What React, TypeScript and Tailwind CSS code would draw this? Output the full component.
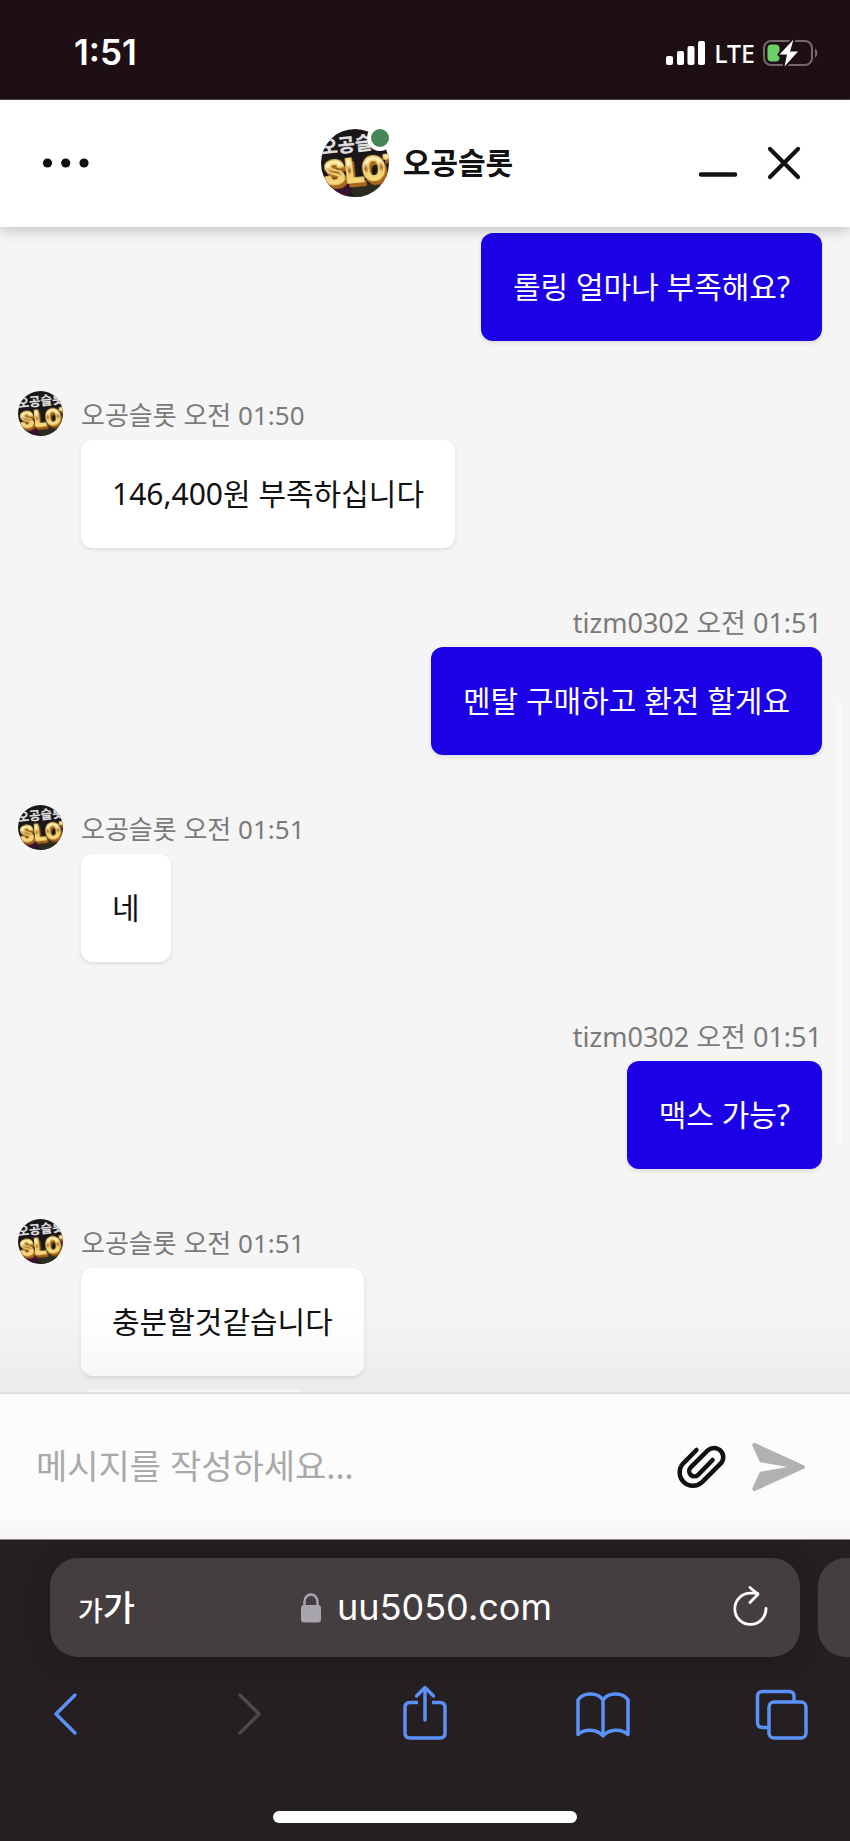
import type { ReactNode } from 'react';

interface Message {
  id: number;
  mine: boolean;
  time?: string;
  text: string;
}

const AGENT_NAME = '오공슬롯';
const USER_NAME = 'tizm0302';

const messages: Message[] = [
  { id: 1, mine: true, text: '롤링 얼마나 부족해요?' },
  { id: 2, mine: false, time: '오전 01:50', text: '146,400원 부족하십니다' },
  { id: 3, mine: true, time: '오전 01:51', text: '멘탈 구매하고 환전 할게요' },
  { id: 4, mine: false, time: '오전 01:51', text: '네' },
  { id: 5, mine: true, time: '오전 01:51', text: '맥스 가능?' },
  { id: 6, mine: false, time: '오전 01:51', text: '충분할것같습니다' },
];

function Avatar({ className }: { className: string }) {
  return (
    <svg viewBox="0 0 68 68" className={className} aria-hidden="true">
      <defs>
        <clipPath id="avatar-clip">
          <circle cx="34" cy="34" r="34" />
        </clipPath>
        <linearGradient id="avatar-gold" x1="0" y1="0" x2="0" y2="1">
          <stop offset="0" stopColor="#ffe98f" />
          <stop offset="0.35" stopColor="#fff8d4" />
          <stop offset="0.5" stopColor="#9a5a18" />
          <stop offset="0.6" stopColor="#f3cc68" />
          <stop offset="1" stopColor="#fff0b0" />
        </linearGradient>
      </defs>
      <g clipPath="url(#avatar-clip)">
        <rect width="68" height="68" fill="#1b1719" />
        <ellipse cx="14" cy="60" rx="16" ry="10" fill="#3a1030" />
        <ellipse cx="48" cy="62" rx="18" ry="7" fill="#2c2b20" />
        <g transform="rotate(-6 34 34)">
          <text x="1" y="22" fontSize="19" fontWeight="900" fill="#dcdcde" fontFamily="'Noto Sans CJK KR', sans-serif">
            오공슬롯
          </text>
          <text
            x="2"
            y="53"
            fontSize="34"
            fontWeight="700"
            fontFamily="Roboto, sans-serif"
            fill="url(#avatar-gold)"
            stroke="#f5d478"
            strokeWidth="2"
            strokeLinejoin="round"
            className="drop-shadow-[2px_4px_0_#a8681a]"
          >
            SLOT
          </text>
        </g>
      </g>
    </svg>
  );
}

function StatusBar() {
  return (
    <div className="flex shrink-0 items-center justify-between border-b border-[#54474c] bg-[#1e0f15] pt-[33px] pr-[30px] pb-[27px] pl-[74px] text-white">
      <span className="font-[Inter,sans-serif] text-[35px] leading-[39px] font-semibold">1:51</span>
      <div className="flex items-center gap-2">
        <svg viewBox="0 0 40 26" className="h-[26px] w-10" fill="currentColor" aria-hidden="true">
          <rect x="0" y="16" width="7" height="9" rx="2" />
          <rect x="11" y="11" width="7" height="14" rx="2" />
          <rect x="21.5" y="6" width="7" height="19" rx="2" />
          <rect x="32" y="1" width="7" height="24" rx="2" />
        </svg>
        <span className="font-['Noto_Sans',sans-serif] text-[25px] leading-[26px] font-medium">LTE</span>
        <svg viewBox="0 0 57 30" className="h-[30px] w-[57px]" aria-hidden="true">
          <rect x="1" y="3" width="48" height="24" rx="7" fill="none" stroke="#75686d" strokeWidth="2" />
          <path d="M52 10.5c3.2 1.6 3.2 7.4 0 9z" fill="#75686d" />
          <rect x="4.5" y="6.5" width="12" height="17" rx="4" fill="#69d166" />
          <path
            d="M30.5 1.5 16.5 16.5H24L21.5 28.5 35 13.5H27z"
            fill="#fff"
            stroke="#1e0f15"
            strokeWidth="4"
            paintOrder="stroke"
            strokeLinejoin="round"
          />
        </svg>
      </div>
    </div>
  );
}

function IconButton({ label, children }: { label: string; children: ReactNode }) {
  return (
    <button type="button" aria-label={label} className="flex shrink-0 items-center justify-center">
      {children}
    </button>
  );
}

function ChatHeader() {
  return (
    <header className="relative z-10 grid shrink-0 grid-cols-[1fr_auto_1fr] items-center bg-white pt-[29px] pr-[46px] pb-[30px] pl-[42px] text-[#111] shadow-[0_2px_14px_rgba(0,0,0,0.25)]">
      <div className="flex">
        <IconButton label="메뉴">
          <svg viewBox="0 0 48 12" className="h-3 w-12" fill="currentColor">
            <circle cx="5.5" cy="6" r="4.6" />
            <circle cx="23.7" cy="6" r="4.6" />
            <circle cx="42" cy="6" r="4.6" />
          </svg>
        </IconButton>
      </div>
      <div className="flex items-center gap-[14px] pr-3">
        <div className="relative">
          <Avatar className="size-[68px]" />
          <span className="absolute -top-1 -right-1 size-[26px] rounded-full border-4 border-white bg-[#458756]" />
        </div>
        <h1 className="text-[30px] leading-[44px] font-bold">{AGENT_NAME}</h1>
      </div>
      <div className="flex justify-end gap-[26px]">
        <IconButton label="최소화">
          <svg viewBox="0 0 40 40" className="size-10" stroke="currentColor" strokeWidth="4.5" strokeLinecap="round">
            <path d="M3 31.5h34" />
          </svg>
        </IconButton>
        <IconButton label="닫기">
          <svg viewBox="0 0 40 40" className="size-10" stroke="currentColor" strokeWidth="4.2" strokeLinecap="round">
            <path d="m6 6 28 28M34 6 6 34" />
          </svg>
        </IconButton>
      </div>
    </header>
  );
}

function MessageItem({ message }: { message: Message }) {
  const { mine, time, text } = message;

  return (
    <li className={mine ? 'flex justify-end' : 'flex gap-[18px]'}>
      {!mine && <Avatar className="size-[45px] shrink-0" />}
      <div className={mine ? 'flex flex-col items-end' : 'flex flex-col items-start'}>
        {time && (
          <p className={`leading-[49px] text-[#7a7a7a] ${mine ? 'text-[27px]' : 'text-[26px]'}`}>
            {mine ? USER_NAME : AGENT_NAME} {time}
          </p>
        )}
        <p
          className={`rounded-xl py-8 text-[30px] leading-[44px] shadow-[0_2px_4px_rgba(0,0,0,0.1)] ${
            mine ? 'bg-[#1c00e6] px-8 text-white' : 'bg-white px-[31px] text-[#111]'
          }`}
        >
          {text}
        </p>
      </div>
    </li>
  );
}

function Composer() {
  return (
    <form className="flex shrink-0 items-center border-t-2 border-[#e0e0e0] bg-linear-to-b from-[#fcfcfc] from-80% to-[#f6f6f6] py-12 pr-11 pl-9">
      <input
        type="text"
        aria-label="메시지"
        placeholder="메시지를 작성하세요..."
        className="min-w-0 flex-1 bg-transparent text-[34px] leading-[49px] text-[#111] outline-none placeholder:text-[#a9a9a9]"
      />
      <div className="flex items-center gap-6">
        <IconButton label="파일 첨부">
          <svg
            viewBox="0 0 52 48"
            className="h-12 w-[52px] text-[#111]"
            fill="none"
            stroke="currentColor"
            strokeWidth="4.5"
            strokeLinecap="round"
            strokeLinejoin="round"
          >
            <path d="M20.5 7 7.3 20.3a13.3 13.3 0 0 0 18.8 18.8L44.8 20.4a9.2 9.2 0 0 0-13-13L14.7 24.4a5.2 5.2 0 0 0 7.4 7.4L36.6 17" />
          </svg>
        </IconButton>
        <IconButton label="보내기">
          <svg viewBox="0 0 54 48" className="h-12 w-[54px] text-[#b1b1b1]" fill="currentColor">
            <path d="M3.5.2 51.8 22.2a2 2 0 0 1 0 3.6L3.5 47.8A2.2 2.2 0 0 1 .5 45L7.2 30.2Q8 28.7 9.5 28.5L35.5 24 9.5 19.5Q8 19.3 7.2 17.8L.5 3A2.2 2.2 0 0 1 3.5.2z" />
          </svg>
        </IconButton>
      </div>
    </form>
  );
}

function AddressBar() {
  return (
    <div className="flex gap-[18px] overflow-hidden pt-[18px] pb-[27px] pl-[50px]">
      <div className="flex min-w-0 flex-1 items-center justify-between rounded-[28px] bg-[#453e40] px-7 py-[25px] shadow-[0_4px_30px_rgba(0,0,0,0.2)]">
        <button type="button" aria-label="페이지 설정" className="flex items-baseline font-medium">
          <span className="text-[27px] leading-[40px]">가</span>
          <span className="text-[35px] leading-[49px]">가</span>
        </button>
        <div className="flex items-center gap-4 pr-[10px]">
          <svg viewBox="0 0 20 30" className="h-[30px] w-5 text-[#a9a5ae]" aria-hidden="true">
            <rect x="0" y="12" width="20" height="17.5" rx="3" fill="currentColor" />
            <path d="M3.5 13V8.5a6.5 7 0 0 1 13 0V13" fill="none" stroke="currentColor" strokeWidth="2.5" />
          </svg>
          <span className="font-[Inter,sans-serif] text-[36px] leading-[49px]">uu5050.com</span>
        </div>
        <IconButton label="새로고침">
          <svg
            viewBox="0 0 44 44"
            className="size-11"
            fill="none"
            stroke="currentColor"
            strokeWidth="2.8"
            strokeLinecap="round"
            strokeLinejoin="round"
          >
            <path d="M38 22.500a15.6 15.6 0 1 1-15.6-15.3H29.500M22 1.5 30 8.2 22 16.5" />
          </svg>
        </IconButton>
      </div>
      <div className="w-8 shrink-0 rounded-l-[28px] bg-[#453e40]" />
    </div>
  );
}

function Toolbar() {
  return (
    <nav className="flex items-center justify-between px-[37px] text-[#5a91f7] [&_svg]:size-[60px] [&_svg]:fill-none [&_svg]:stroke-current [&_svg]:stroke-[3.5]">
      <IconButton label="뒤로">
        <svg viewBox="0 0 60 60" strokeLinecap="round" strokeLinejoin="round">
          <path d="M38 11 19 30 38 49" />
        </svg>
      </IconButton>
      <button type="button" aria-label="앞으로" disabled className="text-[#4d484a]">
        <svg viewBox="0 0 60 60" strokeLinecap="round" strokeLinejoin="round">
          <path d="M24 11 43 30 24 49" />
        </svg>
      </button>
      <IconButton label="공유">
        <svg viewBox="0 0 60 60" strokeLinejoin="round">
          <path d="M23 18.5H15q-5 0-5 5V49q0 5 5 5H45q5 0 5-5V23.5q0-5-5-5H37" />
          <path d="M30 36V3.5M21.5 12 30 3.5 38.5 12" strokeLinecap="round" />
        </svg>
      </IconButton>
      <IconButton label="책갈피">
        <svg viewBox="0 0 60 60" strokeLinecap="round" strokeLinejoin="round">
          <path d="M29 16v36M29 16C24 8 9 8 4 16V50.5C10 44.5 23 44.5 29 52 35 44.5 48 44.5 54 50.5V16C49 8 34 8 29 16z" />
        </svg>
      </IconButton>
      <IconButton label="탭">
        <svg viewBox="0 0 60 60" strokeLinejoin="round">
          <rect x="16" y="18" width="37" height="36" rx="5" />
          <path d="M16 43.5H9.5q-5 0-5-5V12.5q0-5 5-5H36q5 0 5 5v5.5" />
        </svg>
      </IconButton>
    </nav>
  );
}

export default function App() {
  return (
    <div className="flex h-screen flex-col bg-[#f5f5f5] font-['Noto_Sans','Noto_Sans_CJK_KR',sans-serif]">
      <StatusBar />
      <ChatHeader />

      <main className="relative min-h-0 flex-1 overflow-hidden">
        <ul className="flex flex-col gap-[50px] pt-[6px] pr-7 pl-[18px]">
          {messages.map((message) => (
            <MessageItem key={message.id} message={message} />
          ))}
        </ul>
        {/* next reply, mostly hidden behind the composer */}
        <div className="mt-[13px] ml-[81px] h-[108px] w-[226px] rounded-xl bg-white" />

        <div className="absolute top-[475px] right-2 h-[443px] w-[6px] rounded-full bg-[#fafafa]" />
        <div className="absolute inset-x-0 bottom-0 h-20 bg-linear-to-b from-transparent to-black/4" />
      </main>

      <Composer />

      <footer className="shrink-0 border-t border-[#8a8587] bg-[#251f21] text-white">
        <AddressBar />
        <Toolbar />
        <div className="mx-auto mt-[67px] mb-[18px] h-3 w-[304px] rounded-full bg-white" />
      </footer>
    </div>
  );
}
